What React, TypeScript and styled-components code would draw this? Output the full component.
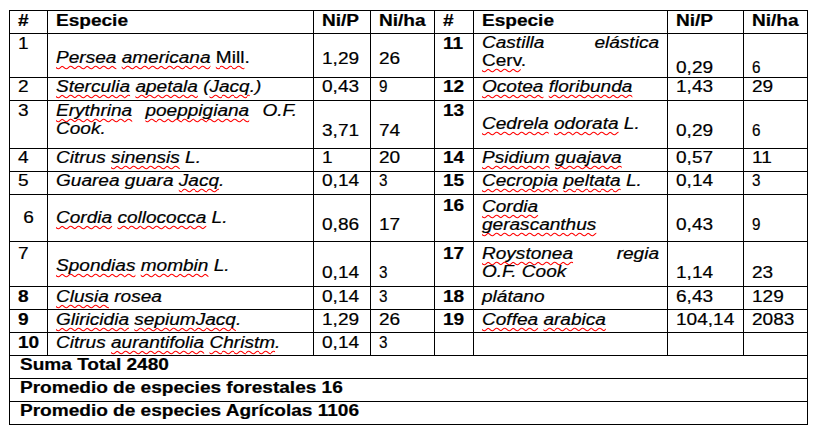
import React from "react";
import styled, { createGlobalStyle } from "styled-components";

// the source is a Word table shot at a slightly wide aspect, so text is stretched
const STRETCH = 1.19;

type Half = {
  no?: string;
  bold?: boolean;
  noPad?: number;
  sp?: React.ReactNode;
  spPad?: number;
  p?: string;
  ha?: string;
  small?: boolean;
  valPad?: number;
};

type Row = { h: number; pad?: number; l: Half; r: Half };

const GlobalStyle = createGlobalStyle`
  html, body {
    margin: 0;
    padding: 0;
    background: #fff;
  }
  body {
    font-family: "Liberation Sans", Arial, sans-serif;
    color: #000;
  }
`;

const Page = styled.div`
  padding: 10px 0 0 9px;
`;

const Grid = styled.div<{ $rows: string }>`
  display: grid;
  grid-template-columns: 38px 266px 57px 64px 39px 194px 76px 64px;
  grid-template-rows: ${(p) => p.$rows};
  width: max-content;
  border-left: 1px solid #000;
  border-top: 1px solid #000;
  font-size: 16px;
  line-height: 18px;
  -webkit-text-stroke: 0.2px #000;
`;

const Cell = styled.div<{ $pad?: number; $pr?: number; $bold?: boolean }>`
  box-sizing: border-box;
  border-right: 1px solid #000;
  border-bottom: 1px solid #000;
  padding: ${(p) => p.$pad ?? 0}px ${(p) => p.$pr ?? 8}px 0 8px;
  font-weight: ${(p) => (p.$bold ? 700 : 400)};
`;

const Total = styled(Cell)`
  grid-column: 1 / -1;
  padding-left: 10px;
  font-weight: 700;
`;

const Txt = styled.div<{ $italic?: boolean }>`
  width: ${100 / STRETCH}%;
  transform: scaleX(${STRETCH});
  transform-origin: 0 0;
  font-style: ${(p) => (p.$italic ? "italic" : "normal")};
  white-space: nowrap;
`;

const Just = styled.span`
  display: block;
  white-space: normal;
  text-align: justify;
  text-align-last: justify;
`;

const Miss = styled.span`
  text-decoration: underline wavy #f00;
  text-decoration-thickness: 1px;
  text-underline-offset: 2px;
  text-decoration-skip-ink: none;
`;

const Up = styled.span`
  font-style: normal;
`;

// a few Ni/ha digits were typed in a narrower face
const Small = styled.span`
  display: inline-block;
  transform: scaleX(0.8);
  transform-origin: 0 0;
`;

const rows: Row[] = [
  {
    h: 44,
    l: {
      no: "1", noPad: 1, spPad: 15, p: "1,29", ha: "26", valPad: 16,
      sp: (
        <>
          <Miss>Persea</Miss> <Miss>americana</Miss>{" "}
          <Up><Miss>Mill</Miss>.</Up>
        </>
      ),
    },
    r: {
      no: "11", bold: true, noPad: 1, spPad: 0, p: "0,29", ha: "6", small: true, valPad: 25,
      sp: (
        <>
          <Just>Castilla elástica</Just>
          <Up><Miss>Cerv</Miss>.</Up>
        </>
      ),
    },
  },
  {
    h: 23,
    l: {
      no: "2", p: "0,43", ha: "9", small: true,
      sp: (
        <>
          <Miss>Sterculia</Miss> <Miss>apetala</Miss> (<Miss>Jacq</Miss>.)
        </>
      ),
    },
    r: {
      no: "12", bold: true, p: "1,43", ha: "29",
      sp: (
        <>
          <Miss>Ocotea</Miss> <Miss>floribunda</Miss>
        </>
      ),
    },
  },
  {
    h: 48,
    pad: 1,
    l: {
      no: "3", p: "3,71", ha: "74", valPad: 21,
      sp: (
        <>
          <Just>
            <Miss>Erythrina</Miss> <Miss>poeppigiana</Miss> O.F.
          </Just>
          Cook.
        </>
      ),
    },
    r: {
      no: "13", bold: true, spPad: 14, p: "0,29", ha: "6", small: true, valPad: 21,
      sp: (
        <>
          <Miss>Cedrela</Miss> <Miss>odorata</Miss> L.
        </>
      ),
    },
  },
  {
    h: 23,
    l: {
      no: "4", p: "1", ha: "20",
      sp: (
        <>
          Citrus <Miss>sinensis</Miss> L.
        </>
      ),
    },
    r: {
      no: "14", bold: true, p: "0,57", ha: "11",
      sp: (
        <>
          <Miss>Psidium</Miss> <Miss>guajava</Miss>
        </>
      ),
    },
  },
  {
    h: 23,
    l: {
      no: "5", p: "0,14", ha: "3", small: true,
      sp: (
        <>
          Guarea guara <Miss>Jacq</Miss>.
        </>
      ),
    },
    r: {
      no: "15", bold: true, p: "0,14", ha: "3", small: true,
      sp: (
        <>
          <Miss>Cecropia</Miss> <Miss>peltata</Miss> L.
        </>
      ),
    },
  },
  {
    h: 47,
    l: {
      no: "\u00a06", noPad: 14, spPad: 14, p: "0,86", ha: "17", valPad: 21,
      sp: (
        <>
          <Miss>Cordia</Miss> <Miss>collococca</Miss> L.
        </>
      ),
    },
    r: {
      no: "16", bold: true, noPad: 2, spPad: 3, p: "0,43", ha: "9", small: true, valPad: 21,
      sp: (
        <>
          <Miss>Cordia</Miss>
          <br />
          <Miss>gerascanthus</Miss>
        </>
      ),
    },
  },
  {
    h: 45,
    pad: 3,
    l: {
      no: "7", spPad: 15, p: "0,14", ha: "3", small: true, valPad: 22,
      sp: (
        <>
          <Miss>Spondias</Miss> <Miss>mombin</Miss> L.
        </>
      ),
    },
    r: {
      no: "17", bold: true, p: "1,14", ha: "23", valPad: 22,
      sp: (
        <>
          <Just>
            <Miss>Roystonea</Miss> regia
          </Just>
          O.F. Cook
        </>
      ),
    },
  },
  {
    h: 23,
    pad: 1,
    l: {
      no: "8", bold: true, p: "0,14", ha: "3", small: true,
      sp: (
        <>
          <Miss>Clusia</Miss> rosea
        </>
      ),
    },
    r: { no: "18", bold: true, p: "6,43", ha: "129", sp: "plátano" },
  },
  {
    h: 23,
    pad: 1,
    l: {
      no: "9", bold: true, p: "1,29", ha: "26",
      sp: (
        <>
          <Miss>Gliricidia</Miss> <Miss>sepiumJacq</Miss>.
        </>
      ),
    },
    r: {
      no: "19", bold: true, p: "104,14", ha: "2083",
      sp: (
        <>
          <Miss>Coffea</Miss> <Miss>arabica</Miss>
        </>
      ),
    },
  },
  {
    h: 23,
    pad: 1,
    l: {
      no: "10", bold: true, p: "0,14", ha: "3", small: true,
      sp: (
        <>
          Citrus <Miss>aurantifolia</Miss> <Miss>Christm</Miss>.
        </>
      ),
    },
    r: {},
  },
];

const totals = [
  "Suma Total 2480",
  "Promedio de especies forestales 16",
  "Promedio de especies Agrícolas 1106",
];

const HalfCells = ({ d, pad, spRight }: { d: Half; pad: number; spRight: number }) => (
  <>
    <Cell $pad={d.noPad ?? pad} $bold={d.bold}>
      <Txt>{d.no}</Txt>
    </Cell>
    <Cell $pad={d.spPad ?? pad} $pr={spRight}>
      <Txt $italic>{d.sp}</Txt>
    </Cell>
    <Cell $pad={d.valPad ?? pad}>
      <Txt>{d.p}</Txt>
    </Cell>
    <Cell $pad={d.valPad ?? pad}>
      <Txt>{d.small ? <Small>{d.ha}</Small> : d.ha}</Txt>
    </Cell>
  </>
);

const HeadCells = () => (
  <>
    <Cell $pad={1} $bold>
      <Txt>#</Txt>
    </Cell>
    <Cell $pad={1} $bold>
      <Txt>Especie</Txt>
    </Cell>
    <Cell $pad={1} $bold>
      <Txt>Ni/P</Txt>
    </Cell>
    <Cell $pad={1} $bold>
      <Txt>Ni/ha</Txt>
    </Cell>
  </>
);

const App = () => {
  const template = ["23px", ...rows.map((r) => `${r.h}px`), ...totals.map(() => "23px")].join(" ");

  return (
    <Page>
      <GlobalStyle />
      <Grid $rows={template}>
        <HeadCells />
        <HeadCells />
        {rows.map((r, i) => (
          <React.Fragment key={i}>
            <HalfCells d={r.l} pad={r.pad ?? 0} spRight={16} />
            <HalfCells d={r.r} pad={r.pad ?? 0} spRight={8} />
          </React.Fragment>
        ))}
        {totals.map((t) => (
          <Total key={t}>
            <Txt>{t}</Txt>
          </Total>
        ))}
      </Grid>
    </Page>
  );
};

export default App;
